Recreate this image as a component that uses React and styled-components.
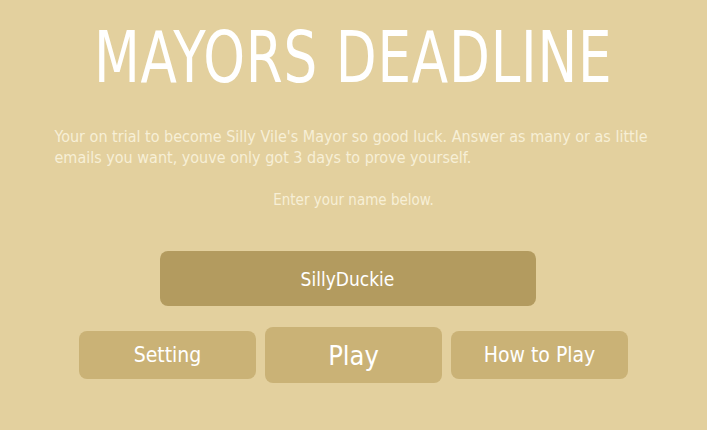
import React, { useState } from 'react';
import styled, { createGlobalStyle } from 'styled-components';

const GlobalStyle = createGlobalStyle`
    html, body {
        margin: 0;
        padding: 0;
        background: #e3d09e;
    }
    body {
        font-family: "DejaVu Sans Condensed", "Liberation Sans", sans-serif;
    }
`;

const Page = styled.main`
    width: 707px;
    height: 430px;
    display: flex;
    flex-direction: column;
    align-items: center;
    box-sizing: border-box;
    padding-top: 17px;
    color: #fff;
`;

// the reference face is much narrower than anything installed, so squeeze it
const Title = styled.h1`
    margin: 0;
    font-weight: 400;
    font-size: 72px;
    line-height: 80px;
    letter-spacing: 1px;
    color: #fff;
    transform: scaleX(0.82);
    white-space: nowrap;
`;

const Intro = styled.p`
    width: 598px;
    margin: 29px 0 0;
    font-size: 16px;
    line-height: 21px;
    color: #f7efd6;
`;

const Prompt = styled.p`
    margin: 22px 0 0;
    font-size: 15px;
    line-height: 21px;
    color: #f7efd6;
`;

const NameInput = styled.input`
    margin-top: 40px;
    margin-left: -12px;
    width: 376px;
    height: 55px;
    box-sizing: border-box;
    border: none;
    border-radius: 8px;
    background: #b39b5f;
    color: #fff;
    font-family: inherit;
    font-size: 19px;
    text-align: center;
    outline: none;
    caret-color: #fff;
`;

const ButtonRow = styled.div`
    display: flex;
    align-items: center;
    gap: 9px;
    margin-top: 21px;
`;

const Button = styled.button`
    width: 177px;
    height: ${p => (p.$main ? '56px' : '48px')};
    border: none;
    border-radius: 8px;
    background: #cab276;
    color: #fff;
    font-family: inherit;
    font-size: ${p => (p.$main ? '27px' : '21px')};
    cursor: pointer;
`;

export default function App() {
    const [name, setName] = useState('SillyDuckie');
    return (
        <>
            <GlobalStyle />
            <Page>
                <Title>MAYORS DEADLINE</Title>
                <Intro>
                    Your on trial to become Silly Vile's Mayor so good luck. Answer as many or as little
                    emails you want, youve only got 3 days to prove yourself.
                </Intro>
                <Prompt>Enter your name below.</Prompt>
                <NameInput value={name} onChange={e => setName(e.target.value)} />
                <ButtonRow>
                    <Button>Setting</Button>
                    <Button $main>Play</Button>
                    <Button>How to Play</Button>
                </ButtonRow>
            </Page>
        </>
    );
}
